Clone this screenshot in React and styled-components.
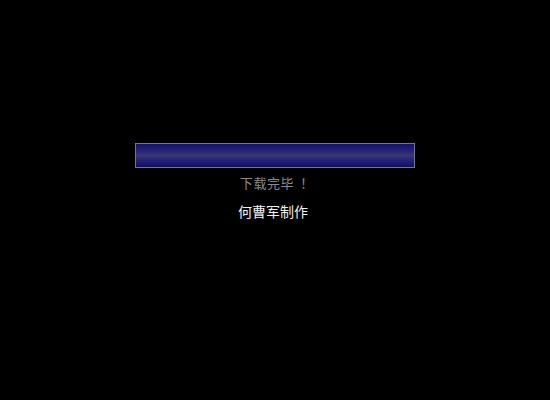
import React from "react";
import styled, { createGlobalStyle } from "styled-components";

const Global = createGlobalStyle`
  html, body { margin: 0; padding: 0; background: #000; }
  body { font-family: "Noto Sans CJK SC", "Noto Sans", sans-serif; }
`;

const Screen = styled.div`
  width: 550px;
  height: 400px;
  background: #000;
  display: flex;
  flex-direction: column;
  align-items: center;
  padding-top: 143px;
  box-sizing: border-box;
`;

const Bar = styled.div`
  width: 280px;
  height: 25px;
  box-sizing: border-box;
  border: 1px solid #74748c;
  background: linear-gradient(
    to bottom,
    #15106a 0%,
    #26237a 30%,
    #3a3874 50%,
    #26237a 70%,
    #120e68 100%
  );
`;

const Caption = styled.div`
  padding-right: ${(p) => p.$shift}px;
  color: ${(p) => p.$color};
  font-size: ${(p) => p.$size}px;
  letter-spacing: ${(p) => p.$spacing}px;
  margin-top: ${(p) => p.$top}px;
  line-height: 18px;
  white-space: nowrap;
`;

const Bang = styled.span`
  display: inline-block;
  width: 10px;
  margin-left: 6px;
  letter-spacing: 0;
`;

export default function App() {
  return (
    <>
      <Global />
      <Screen>
        <Bar />
        <Caption $color="#8a8a8a" $size={13} $spacing={0.6} $top={6} $shift={0}>
          下载完毕<Bang>！</Bang>
        </Caption>
        <Caption $color="#f0f0f0" $size={14} $spacing={0} $top={10} $shift={4}>
          何曹军制作
        </Caption>
      </Screen>
    </>
  );
}
